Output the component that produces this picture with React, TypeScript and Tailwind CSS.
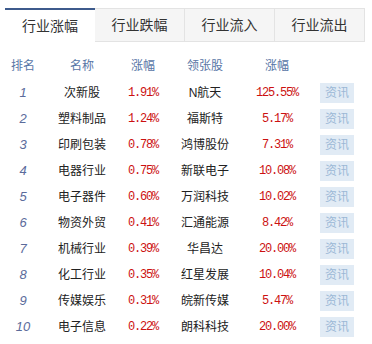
import React from "react";

const rows = [
  { name: "次新股", pct: "1.91%", lead: "N航天", leadPct: "125.55%" },
  { name: "塑料制品", pct: "1.24%", lead: "福斯特", leadPct: "5.17%" },
  { name: "印刷包装", pct: "0.78%", lead: "鸿博股份", leadPct: "7.31%" },
  { name: "电器行业", pct: "0.75%", lead: "新联电子", leadPct: "10.08%" },
  { name: "电子器件", pct: "0.60%", lead: "万润科技", leadPct: "10.02%" },
  { name: "物资外贸", pct: "0.41%", lead: "汇通能源", leadPct: "8.42%" },
  { name: "机械行业", pct: "0.39%", lead: "华昌达", leadPct: "20.00%" },
  { name: "化工行业", pct: "0.35%", lead: "红星发展", leadPct: "10.04%" },
  { name: "传媒娱乐", pct: "0.31%", lead: "皖新传媒", leadPct: "5.47%" },
  { name: "电子信息", pct: "0.22%", lead: "朗科科技", leadPct: "20.00%" },
];

const tabs = ["行业涨幅", "行业跌幅", "行业流入", "行业流出"];

const sans = "font-['Liberation_Sans','Noto_Sans_CJK_SC',sans-serif]";
const mono = "font-['Liberation_Mono','Noto_Sans_CJK_SC',monospace]";
const cols = "grid-cols-[46px_72px_50px_74px_70px_50px]";

export default function App() {
  return (
    <div className={`h-[344px] w-[372px] bg-white ${sans}`}>
      <div className="flex pl-[5px] pr-[7px] pt-[8px]">
        {tabs.map((t, i) => (
          <div
            key={t}
            className={
              i === 0
                ? "flex h-[34px] w-[90px] items-center justify-center border-t-2 border-[#3d5a8c] bg-white text-[14px] text-[#333]"
                : "flex h-[34px] w-[90px] items-center justify-center border border-l-0 border-[#e3e3e3] bg-[#f5f5f5] text-[14px] text-[#333]"
            }
          >
            {t}
          </div>
        ))}
      </div>

      <div className={`grid h-[34px] ${cols} items-end pb-[1px] text-[12px] text-[#5876a6]`}>
        <div className="text-center">排名</div>
        <div className="text-center">名称</div>
        <div className="text-center">涨幅</div>
        <div className="text-center">领张股</div>
        <div className="text-center">涨幅</div>
        <div />
      </div>

      <div className="pt-[4px]">
        {rows.map((r, i) => (
          <div key={r.name} className={`grid h-[26px] ${cols} items-center text-[12px]`}>
            <div className="text-center text-[13px] italic text-[#5b6b9b]">{i + 1}</div>
            <div className="text-center text-[#222]">{r.name}</div>
            <div className={`text-center text-[12px] tracking-[-1.2px] text-[#cc1111] ${mono}`}>{r.pct}</div>
            <div className="text-center text-[#222]">{r.lead}</div>
            <div className={`text-center text-[12px] tracking-[-1.2px] text-[#cc1111] ${mono}`}>{r.leadPct}</div>
            <div className="flex justify-center">
              <span className="flex h-[20px] w-[34px] items-center justify-center bg-[#e1ebf5] text-[12px] text-[#9bb8d6]">
                资讯
              </span>
            </div>
          </div>
        ))}
      </div>
    </div>
  );
}
